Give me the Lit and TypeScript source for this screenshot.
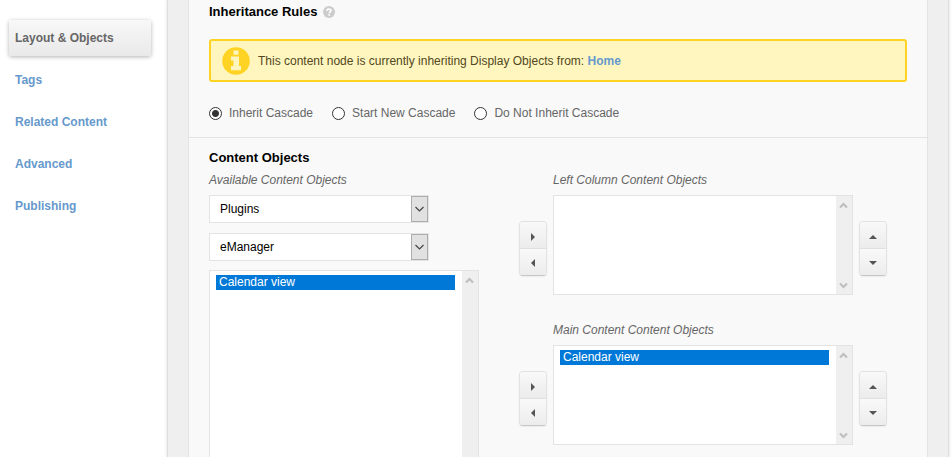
import { LitElement, html, css, svg } from "lit";
import { customElement, property } from "lit/decorators.js";
import { classMap } from "lit/directives/class-map.js";

const arrows: Record<string, string> = {
  right: "M4 2 L8 6 L4 10 Z",
  left: "M8 2 L4 6 L8 10 Z",
  up: "M2 8 L6 4 L10 8 Z",
  down: "M2 4 L6 8 L10 4 Z",
};

const base = css`
  * {
    box-sizing: border-box;
  }
  svg {
    display: block;
  }
`;

/* Two stacked arrow buttons: move between lists, or reorder. */
@customElement("button-pair")
export class ButtonPair extends LitElement {
  @property() kind: "transfer" | "order" = "transfer";

  static styles = [
    base,
    css`
      :host {
        display: block;
        width: 28px;
      }
      .pair {
        display: flex;
        flex-direction: column;
        border: 1px solid #e2e2e2;
        border-bottom-color: #c6c6c6;
        border-radius: 4px;
        box-shadow: 0 1px 2px rgba(0, 0, 0, 0.06);
        overflow: hidden;
      }
      .btn {
        display: flex;
        align-items: center;
        justify-content: center;
        height: 26px;
        padding: 4px 0 0;
        border: 0;
        background: linear-gradient(#f9f9f9, #ececec);
        color: #555;
      }
      .btn + .btn {
        height: 27px;
        padding: 3px 0 0;
        border-top: 1px solid #e0e0e0;
      }
    `,
  ];

  private btn(dir: string, label: string) {
    return html`<button class="btn" type="button" aria-label=${label}>
      <svg width="12" height="12" viewBox="0 0 12 12" aria-hidden="true">
        ${svg`<path d=${arrows[dir]} fill="currentColor"/>`}
      </svg>
    </button>`;
  }

  render() {
    return html`<div class="pair">
      ${this.kind === "transfer"
        ? [this.btn("right", "Add"), this.btn("left", "Remove")]
        : [this.btn("up", "Move up"), this.btn("down", "Move down")]}
    </div>`;
  }
}

@customElement("object-list")
export class ObjectList extends LitElement {
  @property() label = "";
  @property({ type: Array }) items: string[] = [];

  static styles = [
    base,
    css`
      :host {
        display: flex;
        height: 100px;
        border: 1px solid #e3e3e3;
        background: #fff;
      }
      .list {
        flex: 1;
        min-width: 0;
        height: auto;
        margin: 0;
        padding: 4px 7px 4px 6px;
        border: 0;
        border-radius: 0;
        outline: 0;
        appearance: none;
        overflow: hidden;
        background: #fff;
        font: 12px/15px "Liberation Sans", Arial, sans-serif;
      }
      .item {
        min-height: 15px;
        padding: 0 3px;
        border-radius: 0;
        line-height: 15px;
        color: #000;
      }
      .item:checked {
        background: #0078d7 linear-gradient(#0078d7, #0078d7);
        color: #fff;
      }
      .rail {
        display: flex;
        flex-direction: column;
        justify-content: space-between;
        align-items: flex-start;
        width: 16px;
        padding: 5px 3px 4px;
        background: #efefef;
      }
    `,
  ];

  render() {
    return html`
      <select class="list" multiple aria-label=${this.label}>
        ${this.items.map((i) => html`<option class="item" selected>${i}</option>`)}
      </select>
      <div class="rail" aria-hidden="true">
        <svg width="9" height="8" viewBox="0 0 9 8">
          <path d="M1 6.5 L4.5 3 L8 6.5" fill="none" stroke="#bfbfbf" stroke-width="2.2" />
        </svg>
        <svg width="9" height="8" viewBox="0 0 9 8">
          <path d="M1 1.5 L4.5 5 L8 1.5" fill="none" stroke="#bfbfbf" stroke-width="2.2" />
        </svg>
      </div>
    `;
  }
}

@customElement("app-root")
export class AppRoot extends LitElement {
  static styles = [
    base,
    css`
      :host {
        display: flex;
        height: 100vh;
        overflow: hidden;
        background: #fff;
        color: #666;
        font: 12px/16px "Liberation Sans", Arial, sans-serif;
      }
      a {
        color: #6699cc;
        font-weight: bold;
        text-decoration: none;
      }
      .side {
        flex: 0 0 167px;
        display: flex;
        flex-direction: column;
        gap: 6px;
        padding: 20px 16px 0 9px;
      }
      .tab {
        display: block;
        height: 36px;
        padding: 0 6px;
        border-radius: 3px;
        line-height: 36px;
      }
      .current {
        background: linear-gradient(#f8f8f8, #e9e9e9);
        box-shadow: 0 1px 4px rgba(0, 0, 0, 0.3);
        color: #666;
      }
      .frame {
        flex: 1;
        margin-right: 3px;
        padding: 0 20px;
        border: solid #dedede;
        border-width: 0 1px;
        background: #efefef;
        box-shadow: 0 0 3px rgba(0, 0, 0, 0.15);
      }
      .panel {
        height: 100%;
        border: solid #e3e3e3;
        border-width: 0 1px;
        background: #f9f9f9;
      }
      .block {
        padding: 4px 20px 16px;
      }
      .block + .block {
        padding-top: 12px;
        border-top: 1px solid #e3e3e3;
      }
      .title {
        display: flex;
        align-items: center;
        gap: 6px;
        margin: 0;
        color: #000;
        font-size: 13px;
        line-height: 16px;
      }
      .notice {
        display: flex;
        align-items: center;
        gap: 8px;
        height: 43px;
        margin: 19px 0 23px;
        padding: 0 11px;
        border: 2px solid #ffd324;
        border-radius: 3px;
        background: #fff6bf;
        color: #514721;
      }
      .radios {
        display: flex;
        gap: 19px;
      }
      .choice {
        display: flex;
        align-items: center;
        gap: 7px;
      }
      .radio {
        appearance: none;
        width: 13px;
        height: 13px;
        margin: 0;
        border: 1px solid #333;
        border-radius: 50%;
        background: #fff;
      }
      .radio:checked {
        background: radial-gradient(circle, #333 3px, #fff 4px);
      }
      .columns {
        display: grid;
        grid-template-columns: 270px 1fr;
        gap: 40px;
        padding-top: 6px;
      }
      .caption {
        height: 23px;
        margin: 0;
        font-style: italic;
        font-weight: normal;
        font-size: 12px;
        line-height: 16px;
      }
      .drop {
        display: flex;
        position: relative;
        width: 220px;
      }
      .drop + .drop {
        margin-top: 10px;
      }
      .drop .pick {
        appearance: none;
        width: 100%;
        height: 28px;
        padding: 0 10px;
        border: 1px solid #e3e3e3;
        border-radius: 0;
        background: #fff;
        color: #000;
        font: inherit;
      }
      .knob {
        position: absolute;
        top: 1px;
        right: 1px;
        display: grid;
        place-items: center;
        width: 17px;
        height: 26px;
        border: 1px solid #adadad;
        background: #e1e1e1;
        pointer-events: none;
      }
      .long {
        height: 300px;
        margin-top: 9px;
      }
      .target {
        display: grid;
        grid-template-columns: 28px 300px 28px;
        column-gap: 6px;
        align-items: center;
        margin-bottom: 27px;
      }
      .target .caption {
        grid-column: 2 / 4;
      }
      .target button-pair {
        margin-top: 6px;
      }
    `,
  ];

  private tabs = ["Layout & Objects", "Tags", "Related Content", "Advanced", "Publishing"];
  private modes = ["Inherit Cascade", "Start New Cascade", "Do Not Inherit Cascade"];
  private targets = [
    { name: "Left Column Content Objects", items: [] as string[] },
    { name: "Main Content Content Objects", items: ["Calendar view"] },
  ];

  private drop(label: string, value: string) {
    return html`<div class="drop">
      <select class="pick" aria-label=${label}>
        <option>${value}</option>
      </select>
      <span class="knob" aria-hidden="true">
        <svg width="9" height="6" viewBox="0 0 9 6">
          <path d="M.5 1 L4.5 5 L8.5 1" fill="none" stroke="#444" stroke-width="1.2" />
        </svg>
      </span>
    </div>`;
  }

  render() {
    return html`
      <nav class="side">
        ${this.tabs.map(
          (t, i) => html`<a href="#" class=${classMap({ tab: true, current: i === 0 })}>${t}</a>`
        )}
      </nav>
      <main class="frame">
        <div class="panel">
          <section class="block">
            <h2 class="title">
              Inheritance Rules
              <svg width="12" height="12" viewBox="0 0 12 12" aria-hidden="true">
                <circle cx="6" cy="6" r="6" fill="#ccc" />
                <path
                  d="M4 4.7 C4 2.6 8 2.6 8 4.6 C8 5.9 6.2 5.8 6.2 7.3 M6.2 8.2 V9.8"
                  fill="none"
                  stroke="#fff"
                  stroke-width="1.7"
                />
              </svg>
            </h2>
            <div class="notice">
              <svg width="28" height="28" viewBox="0 0 28 28" aria-hidden="true">
                <circle cx="14" cy="14" r="13.8" fill="#ffd324" />
                <path
                  d="M11.5 3.5 H16.5 V7.8 H11.5 Z M9 9.6 H17 V19 H19 V23.2 H9 V19 H11.5 V13.6 H9 Z"
                  fill="#fff6bf"
                />
              </svg>
              <span>
                This content node is currently inheriting Display Objects from:
                <a href="#">Home</a>
              </span>
            </div>
            <div class="radios">
              ${this.modes.map(
                (m, i) => html`<label class="choice">
                  <input class="radio" type="radio" name="mode" ?checked=${i === 0} />${m}
                </label>`
              )}
            </div>
          </section>
          <section class="block">
            <h2 class="title">Content Objects</h2>
            <div class="columns">
              <div>
                <h3 class="caption">Available Content Objects</h3>
                ${this.drop("Object source", "Plugins")} ${this.drop("Plugin", "eManager")}
                <object-list
                  class="long"
                  label="Available Content Objects"
                  .items=${["Calendar view"]}
                ></object-list>
              </div>
              <div>
                ${this.targets.map(
                  (t) => html`<div class="target">
                    <h3 class="caption">${t.name}</h3>
                    <button-pair kind="transfer"></button-pair>
                    <object-list label=${t.name} .items=${t.items}></object-list>
                    <button-pair kind="order"></button-pair>
                  </div>`
                )}
              </div>
            </div>
          </section>
        </div>
      </main>
    `;
  }
}
